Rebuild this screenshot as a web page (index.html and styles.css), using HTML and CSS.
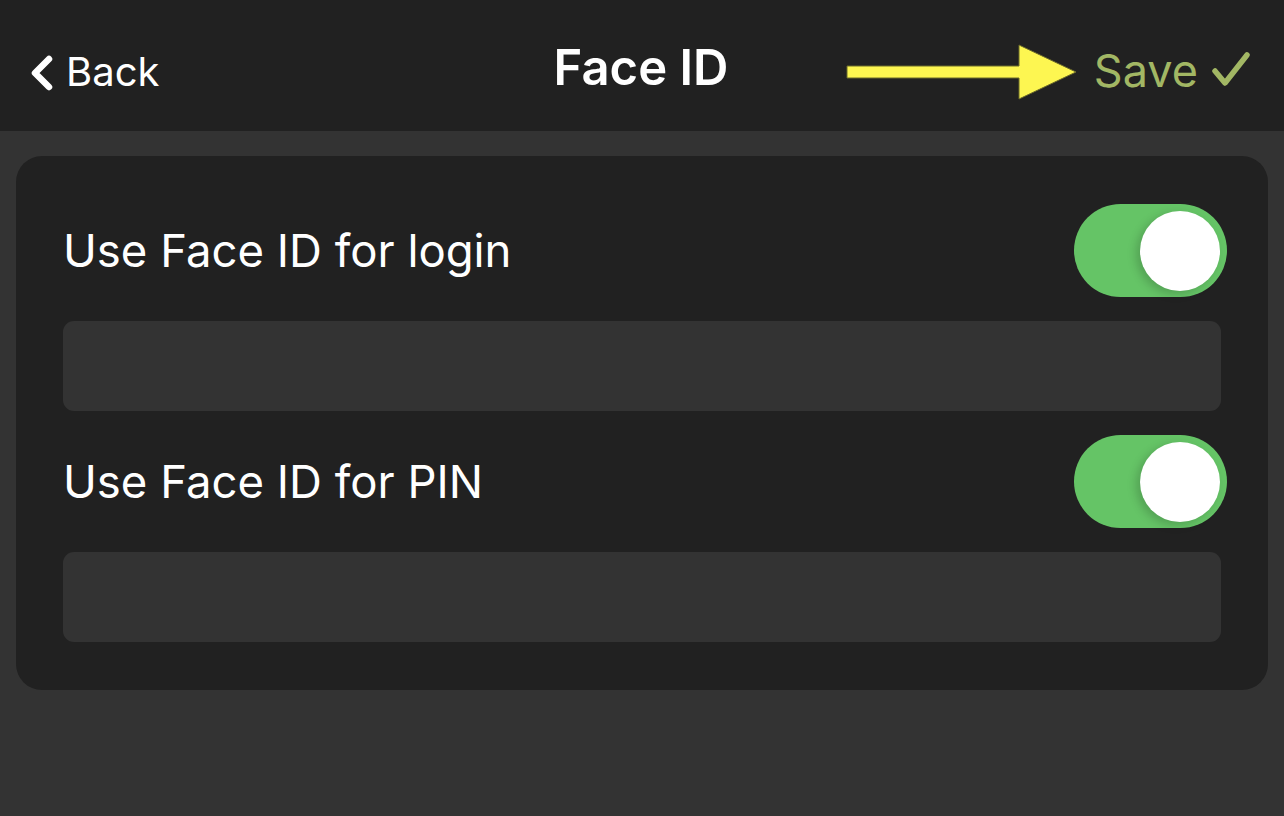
FILE: index.html
```html
<!DOCTYPE html>
<html lang="en">
<head>
    <meta charset="UTF-8">
    <meta name="viewport" content="width=device-width, initial-scale=1.0">
    <title>Face ID</title>
    <link rel="stylesheet" href="styles.css">
</head>
<body>
    <header class="navbar">
        <a class="nav-back" href="#">
            <svg class="chevron" width="24" height="36" viewBox="0 0 24 36">
                <path d="M19 4 L5 18 L19 32" fill="none" stroke="#fff" stroke-width="6.5" stroke-linecap="round" stroke-linejoin="round"/>
            </svg>
            <span>Back</span>
        </a>
        <h1 class="nav-title">Face ID</h1>
        <a class="nav-save" href="#">
            <span>Save</span>
            <svg class="check" width="42" height="38" viewBox="0 0 42 38">
                <path d="M5 21 L15 33 L37 5" fill="none" stroke="#a2b764" stroke-width="5.5" stroke-linecap="round" stroke-linejoin="round"/>
            </svg>
        </a>

        <!-- annotation arrow -->
        <svg class="arrow" width="236" height="60" viewBox="0 0 236 60">
            <path d="M1 23 H173 V2 L230 29 L173 56 V35 H1 Z" fill="#fdf651" stroke="#6b6a2a" stroke-width="1"/>
        </svg>
    </header>

    <section class="card">
        <div class="setting-row">
            <span class="setting-label">Use Face ID for login</span>
            <div class="toggle on"><div class="knob"></div></div>
        </div>
        <div class="field"></div>

        <div class="setting-row">
            <span class="setting-label">Use Face ID for PIN</span>
            <div class="toggle on"><div class="knob"></div></div>
        </div>
        <div class="field"></div>
    </section>
</body>
</html>
```

FILE: styles.css
```css
body {
    font-family: Inter, "Noto Sans", sans-serif;
    background-color: #333333;
    margin: 0;
    padding: 0;
    color: #ffffff;
}
.navbar {
    position: relative;
    height: 131px;
    background-color: #212121;
    display: grid;
    grid-template-columns: 1fr auto 1fr;
    align-items: center;
    padding: 0 32px 0 30px;
}
.nav-back {
    display: flex;
    align-items: center;
    gap: 12px;
    color: #ffffff;
    text-decoration: none;
    font-size: 40px;
    margin-top: 12px;
}
.nav-back .chevron {
    margin-top: 2px;
}
.nav-title {
    margin: 0;
    font-size: 49px;
    font-weight: 600;
    margin-top: 4px;
}
.nav-save {
    justify-self: end;
    display: flex;
    align-items: center;
    gap: 12px;
    color: #a2b764;
    text-decoration: none;
    font-size: 45px;
    margin-top: 10px;
}
.nav-save .check {
    margin-top: -4px;
}
.arrow {
    position: absolute;
    left: 846px;
    top: 43px;
}
.card {
    margin: 25px 16px 0;
    background-color: #212121;
    border-radius: 26px;
    padding: 48px 41px 48px 47px;
    display: flex;
    flex-direction: column;
    gap: 24px;
}
.setting-row {
    display: flex;
    align-items: center;
    justify-content: space-between;
}
.setting-label {
    font-size: 45.5px;
    padding-left: 0;
}
.toggle {
    width: 153px;
    height: 93px;
    border-radius: 47px;
    background-color: #65c466;
    display: flex;
    align-items: center;
    justify-content: flex-end;
    padding: 0 7px;
    box-sizing: border-box;
}
.knob {
    width: 80px;
    height: 80px;
    border-radius: 50%;
    background-color: #ffffff;
    box-shadow: -4px 3px 10px rgba(0, 0, 0, 0.18);
}
.field {
    height: 90px;
    margin-right: 6px;
    background-color: #333333;
    border-radius: 11px;
}
```
